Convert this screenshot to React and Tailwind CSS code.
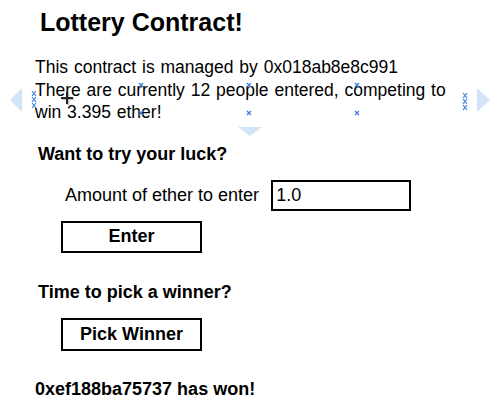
import React from 'react';

// little selection handle, drawn as an x
function Cross({ x, y }) {
  return (
    <svg className="absolute" style={{ left: x - 3, top: y - 3 }} width="6" height="6" viewBox="0 0 6 6">
      <path d="M1 1L5 5M5 1L1 5" stroke="#3b82e0" strokeWidth="1.3" />
    </svg>
  );
}

function Stack({ x, y }) {
  return (
    <svg className="absolute" style={{ left: x, top: y }} width="6" height="19" viewBox="0 0 6 19">
      <path d="M1 1L5 6M5 1L1 6M1 7L5 12M5 7L1 12M1 13L5 18M5 13L1 18" stroke="#3b82e0" strokeWidth="1.2" fill="none" />
    </svg>
  );
}

function Handles() {
  return (
    <>
      <div className="absolute left-[10px] top-[88px] w-0 h-0 border-y-[12px] border-y-transparent border-r-[12px] border-r-[#d3e3f8]" />
      <div className="absolute left-[477px] top-[88px] w-0 h-0 border-y-[12px] border-y-transparent border-l-[13px] border-l-[#d3e3f8]" />
      <div className="absolute left-[238px] top-[127px] w-0 h-0 border-x-[12px] border-x-transparent border-t-[9px] border-t-[#d3e3f8]" />

      <Stack x={31} y={90} />
      <Stack x={462} y={92} />

      <Cross x={141} y={85} />
      <Cross x={141} y={113} />
      <Cross x={249} y={85} />
      <Cross x={249} y={113} />
      <Cross x={357} y={85} />
      <Cross x={357} y={113} />

      {/* mouse cursor */}
      <svg className="absolute left-[59px] top-[90px]" width="16" height="16" viewBox="0 0 16 16">
        <path d="M9 3V15M3 9H15" stroke="#999" strokeWidth="2.5" opacity="0.6" />
        <path d="M8 2V14M2 8H14" stroke="#222" strokeWidth="2" />
      </svg>
    </>
  );
}

export default function App() {
  return (
    <div className="relative w-[493px] h-[420px] bg-white text-black overflow-hidden font-['Liberation_Sans',Arial,sans-serif]">
      <div className="pl-[35px] pt-[7px] flex flex-col items-start">
        <h1 className="pl-[5px] text-[25px] leading-[30px] font-bold">Lottery Contract!</h1>

        <p className="mt-[19px] text-[17.5px] leading-[22.5px] w-[428px] [word-spacing:1px]">
          This contract is managed by 0x018ab8e8c991
          <br />
          There are currently 12 people entered, competing to win 3.395 ether!
        </p>

        <h4 className="mt-[19px] pl-[3px] text-[18px] leading-[22px] font-bold">Want to try your luck?</h4>

        <div className="mt-[15px] pl-[30px] flex items-center gap-[12px]">
          <label className="text-[18px] leading-[22px]">Amount of ether to enter</label>
          <input
            defaultValue="1.0"
            className="w-[140px] h-[31px] border-2 border-black px-[3px] text-[18px] outline-none"
          />
        </div>

        <button className="mt-[10px] ml-[26px] w-[141px] h-[32px] border-2 border-black text-[18px] font-bold">
          Enter
        </button>

        <h4 className="mt-[28px] pl-[3px] text-[18px] leading-[22px] font-bold">Time to pick a winner?</h4>

        <button className="mt-[15px] ml-[26px] w-[141px] h-[33px] border-2 border-black text-[18px] font-bold">
          Pick Winner
        </button>

        <h3 className="mt-[27px] text-[18px] leading-[22px] font-bold">0xef188ba75737 has won!</h3>
      </div>

      <Handles />
    </div>
  );
}
